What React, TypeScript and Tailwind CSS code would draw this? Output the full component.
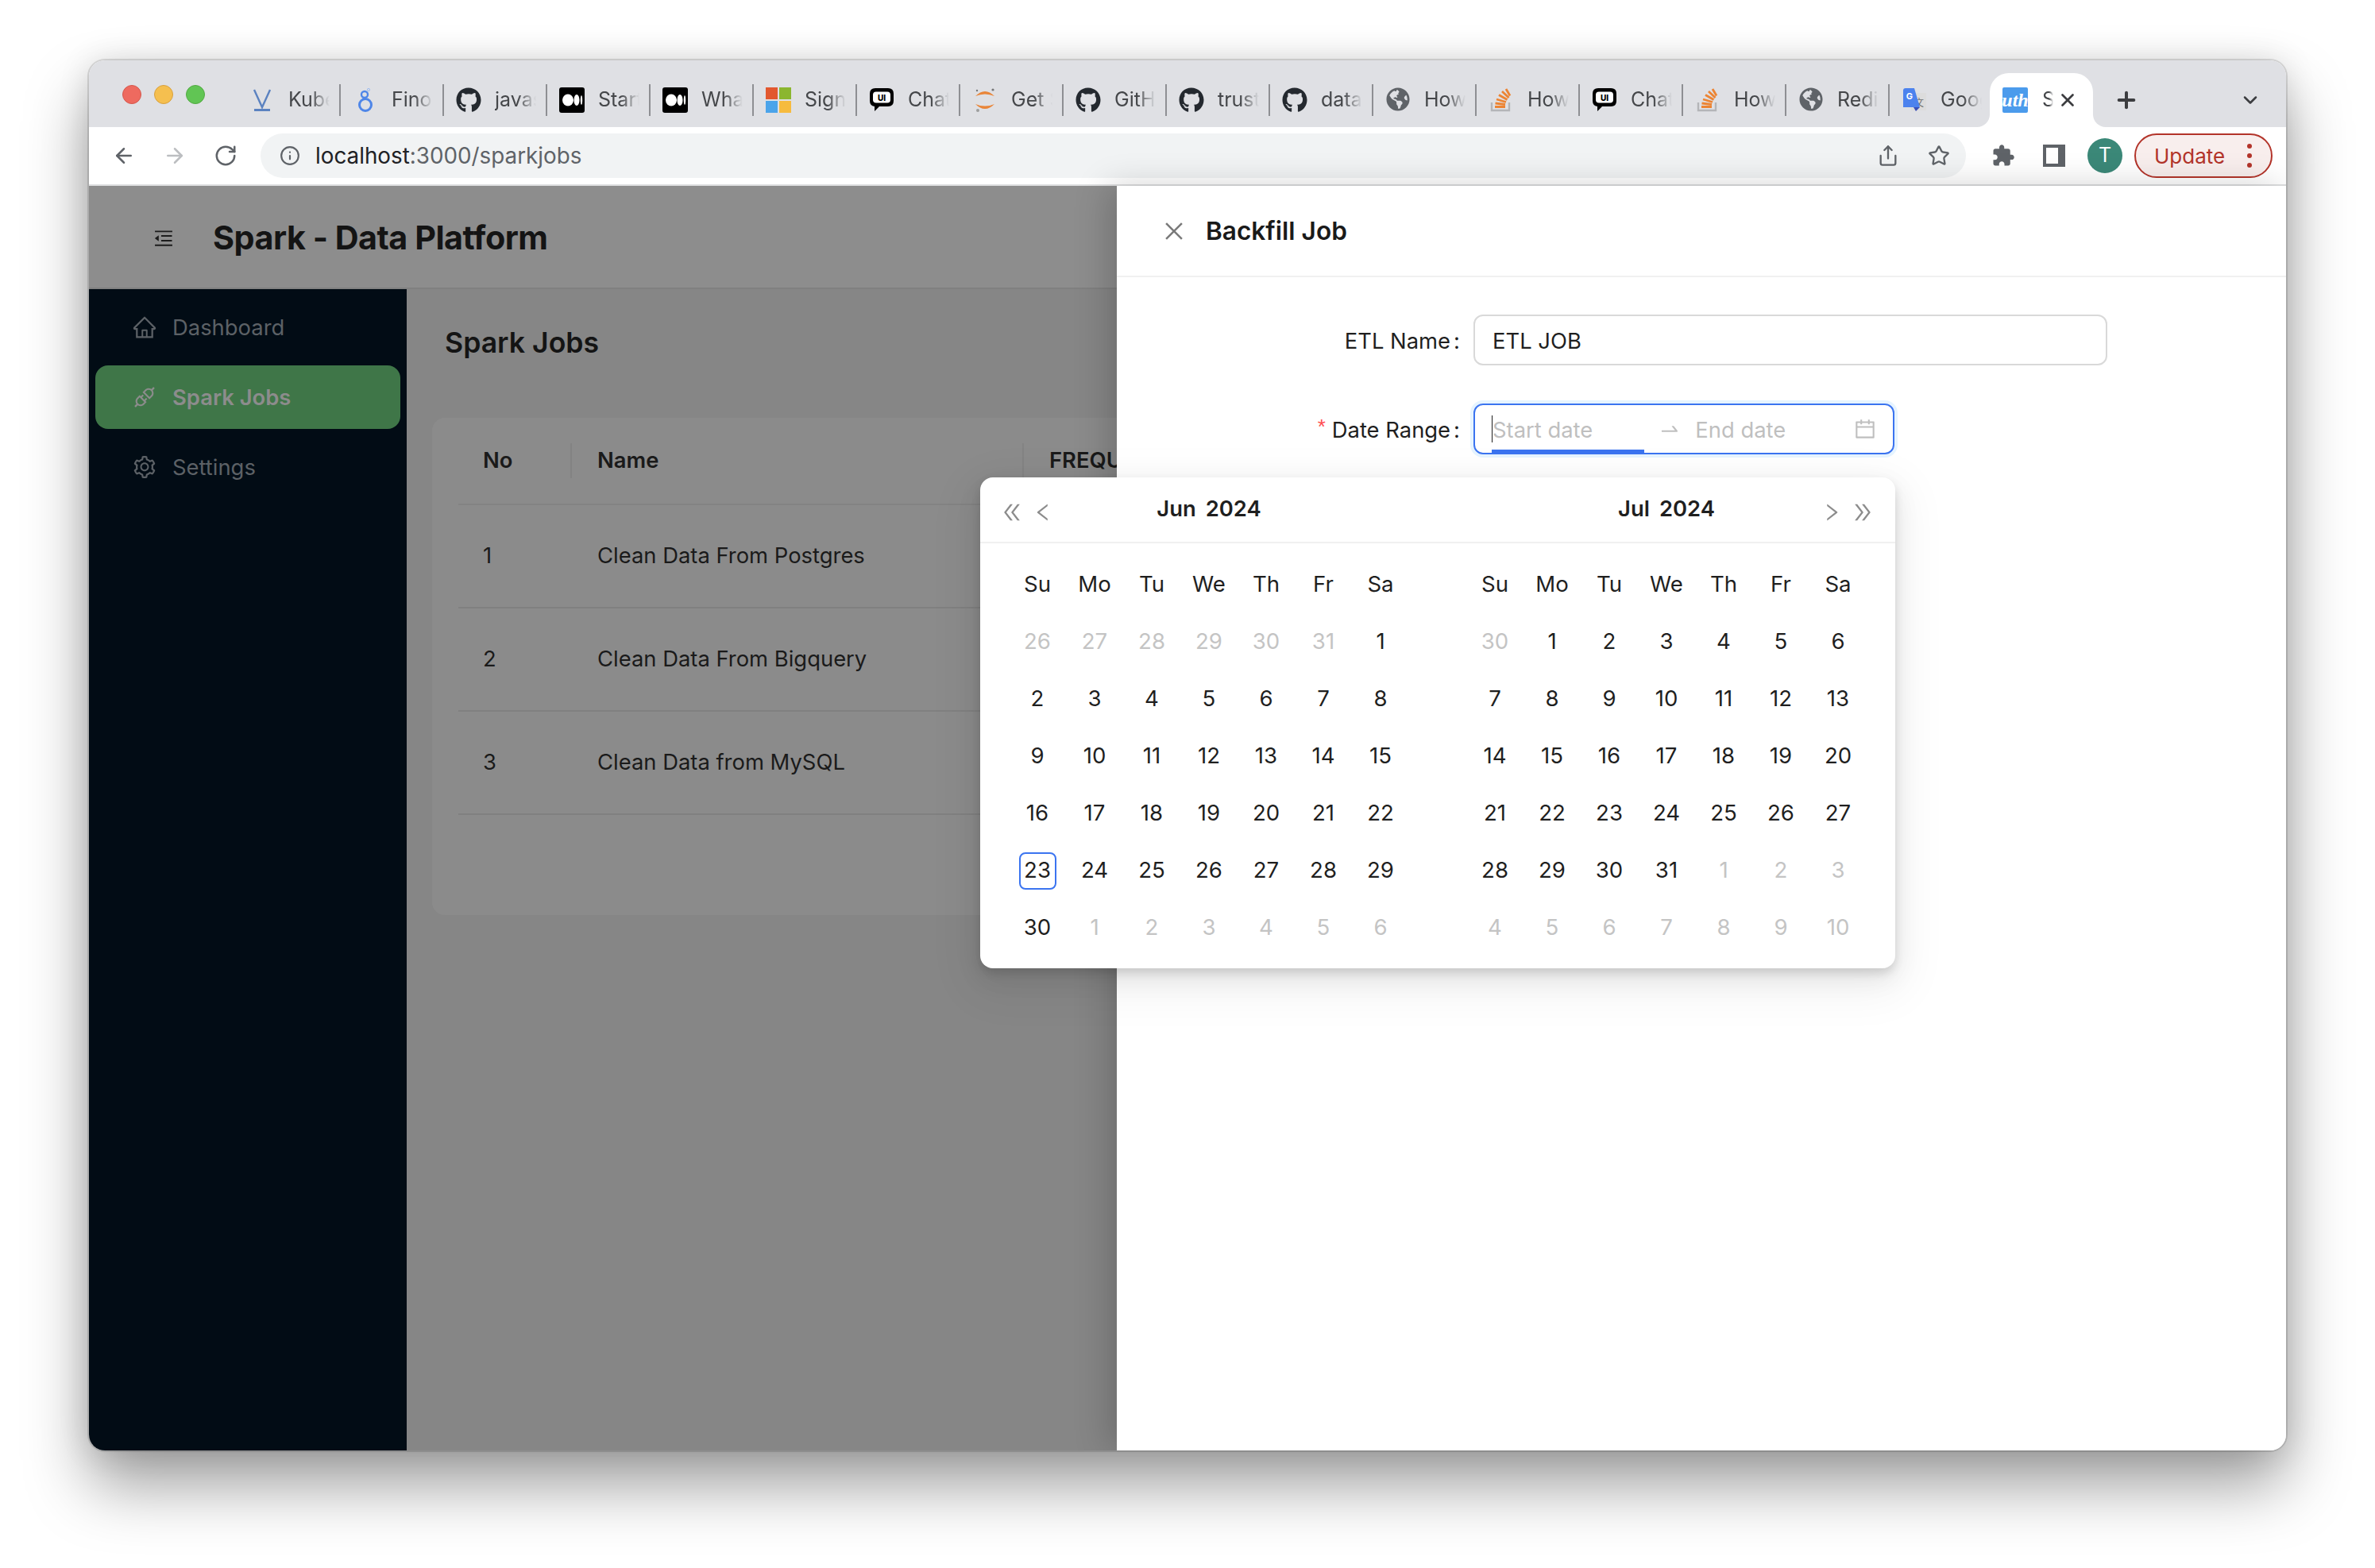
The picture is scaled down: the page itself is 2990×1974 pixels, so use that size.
import React from "react";
import { ArrowLeft, ArrowRight, RotateCw, Info, Share, Star, Plus, X, ChevronDown } from "lucide-react";
import { FaGithub, FaGlobeAmericas } from "react-icons/fa";
import {
  AiOutlineHome, AiOutlineApi, AiOutlineSetting, AiOutlineClose, AiOutlineCalendar, AiOutlineSwapRight,
  AiOutlineDoubleLeft, AiOutlineDoubleRight, AiOutlineLeft, AiOutlineRight, AiOutlineMenuFold,
} from "react-icons/ai";

const VIcon = () => (
  <svg viewBox="0 0 32 32" className="w-8 h-8">
    <path d="M6 3 L16 25 L26 3" fill="none" stroke="#5b82c0" strokeWidth="2.4" />
    <rect x="6" y="27" width="20" height="3" fill="#5b82c0" />
  </svg>
);
const FinoIcon = () => (
  <svg viewBox="0 0 32 32" className="w-8 h-8">
    <circle cx="16" cy="22" r="7.5" fill="none" stroke="#4f86e8" strokeWidth="3" />
    <circle cx="15" cy="9" r="4" fill="none" stroke="#4f86e8" strokeWidth="2.4" />
    <circle cx="20" cy="3" r="1.6" fill="none" stroke="#9dbcf0" strokeWidth="1" />
  </svg>
);
const MediumIcon = () => (
  <svg viewBox="0 0 32 32" className="w-8 h-8">
    <rect x="0" y="0" width="32" height="32" rx="3" fill="#000" />
    <ellipse cx="11" cy="16" rx="7" ry="7.5" fill="#fff" />
    <ellipse cx="22" cy="16" rx="3.5" ry="7" fill="#fff" />
    <ellipse cx="28" cy="16" rx="1.2" ry="6" fill="#fff" />
  </svg>
);
const MsIcon = () => (
  <svg viewBox="0 0 32 32" className="w-8 h-8">
    <rect x="0" y="0" width="15" height="15" fill="#e2582f" />
    <rect x="17" y="0" width="15" height="15" fill="#8bb62f" />
    <rect x="0" y="17" width="15" height="15" fill="#4ba4ea" />
    <rect x="17" y="17" width="15" height="15" fill="#f6bb3f" />
  </svg>
);
const ChatIcon = () => (
  <svg viewBox="0 0 32 32" className="w-8 h-8">
    <path d="M8 1 H24 Q31 1 31 8 V17 Q31 24 24 24 H13 L7 30 V24 Q1 23 1 17 V8 Q1 1 8 1 Z" fill="#000" />
    <rect x="5" y="5.5" width="22" height="14" rx="4" fill="#fff" />
    <text x="16" y="16.5" textAnchor="middle" fontSize="10" fontWeight="800" fill="#000" fontFamily="Inter, sans-serif">UI</text>
  </svg>
);
const JupyterIcon = () => (
  <svg viewBox="0 0 32 32" className="w-8 h-8">
    <path d="M4 11 Q16 -1 28 11 Q16 6 4 11 Z" fill="#e9863a" />
    <path d="M4 21 Q16 33 28 21 Q16 26 4 21 Z" fill="#e9863a" />
    <circle cx="26" cy="3" r="1.6" fill="#767677" />
    <circle cx="6" cy="4" r="1.2" fill="#767677" />
    <circle cx="7" cy="29" r="2" fill="#9e9e9e" />
  </svg>
);
const SoIcon = () => (
  <svg viewBox="0 0 32 32" className="w-8 h-8">
    <path d="M4 19 V29 H26 V19" fill="none" stroke="#b4b5b8" strokeWidth="2.4" />
    <g stroke="#ec8433" strokeWidth="2.8">
      <path d="M8 24.5 H21" />
      <path d="M8.5 20 L21 21.5" />
      <path d="M10 15 L22 18.5" />
      <path d="M13 9.5 L23.5 15.5" />
      <path d="M17 5 L25.5 13" />
      <path d="M22 2 L27 10.5" />
    </g>
  </svg>
);
const TranslateIcon = () => (
  <svg viewBox="0 0 32 32" className="w-8 h-8">
    <rect x="12" y="7" width="19" height="22" fill="#dcdcdc" />
    <text x="22" y="24" textAnchor="middle" fontSize="12" fill="#6b6b6b" fontFamily="Noto Sans CJK SC, sans-serif">文</text>
    <path d="M2 4 Q2 1 5 1 H16 L23 25 H2 Z" fill="#4c82ee" />
    <path d="M15 25 H23 L18 30 Z" fill="#3a4fb8" />
    <text x="10" y="15" textAnchor="middle" fontSize="11" fontWeight="700" fill="#fff" fontFamily="Inter, sans-serif">G</text>
  </svg>
);
const UthIcon = () => (
  <svg viewBox="0 0 32 32" className="w-8 h-8">
    <defs>
      <clipPath id="uth"><rect width="32" height="32" rx="2" /></clipPath>
    </defs>
    <g clipPath="url(#uth)">
      <rect width="32" height="32" fill="#4b9bec" />
      <text x="16" y="24" textAnchor="middle" fontSize="24" fontWeight="700" fontStyle="italic" fill="#fff" fontFamily="Liberation Serif, serif">uth</text>
    </g>
  </svg>
);
const PuzzleIcon = () => (
  <svg viewBox="0 0 24 24" className="ml-[32px] w-[30px] h-[30px]" fill="#5f6368">
    <path d="M20.5 11H19V7c0-1.1-.9-2-2-2h-4V3.5C13 2.12 11.88 1 10.5 1S8 2.12 8 3.5V5H4c-1.1 0-1.99.9-1.99 2v3.8H3.5c1.49 0 2.7 1.21 2.7 2.7s-1.21 2.7-2.7 2.7H2V20c0 1.1.9 2 2 2h3.8v-1.5c0-1.49 1.21-2.7 2.7-2.7 1.49 0 2.7 1.21 2.7 2.7V22H17c1.1 0 2-.9 2-2v-4h1.5c1.38 0 2.5-1.12 2.5-2.5S21.88 11 20.5 11z" />
  </svg>
);
const Gh = () => <FaGithub className="w-8 h-8 text-[#24292f]" />;
const Globe = () => <FaGlobeAmericas className="w-[30px] h-[30px] mx-[1px] text-[#5f6368]" />;

const tabs: { icon: React.ReactNode; label: string }[] = [
  { icon: <VIcon />, label: "Kube" },
  { icon: <FinoIcon />, label: "Finop" },
  { icon: <Gh />, label: "javas" },
  { icon: <MediumIcon />, label: "Start" },
  { icon: <MediumIcon />, label: "What" },
  { icon: <MsIcon />, label: "Sign" },
  { icon: <ChatIcon />, label: "Chat" },
  { icon: <JupyterIcon />, label: "Get S" },
  { icon: <Gh />, label: "GitHu" },
  { icon: <Gh />, label: "trust" },
  { icon: <Gh />, label: "data" },
  { icon: <Globe />, label: "How" },
  { icon: <SoIcon />, label: "How" },
  { icon: <ChatIcon />, label: "Chat" },
  { icon: <SoIcon />, label: "How" },
  { icon: <Globe />, label: "Redis" },
];

function Tab({ icon, label, sep }: { icon: React.ReactNode; label: string; sep: boolean }) {
  return (
    <div className={`${sep ? "w-[130px]" : "w-[126px]"} h-[68px] flex items-center pl-[15px] shrink-0`}>
      <div className="w-8 h-8 shrink-0">{icon}</div>
      <div className="ml-[17px] w-[52px] overflow-hidden whitespace-nowrap text-[25px] text-[#45474a] [mask-image:linear-gradient(to_right,black_55%,transparent_100%)]">
        {label}
      </div>
      {sep && <div className="ml-auto w-[2px] h-[40px] bg-[#8e8f93]" />}
    </div>
  );
}

function BrowserChrome() {
  return (
    <>
      <div className="h-[84px] bg-[#dfe0e4] flex items-end shrink-0">
        <div className="w-[187px] h-full pl-[42px] pt-[31px] flex gap-[16px] shrink-0">
          <div className="w-6 h-6 rounded-full bg-[#ee6a5f] border border-[#d5574c]" />
          <div className="w-6 h-6 rounded-full bg-[#f5bf4f] border border-[#d8a03e]" />
          <div className="w-6 h-6 rounded-full bg-[#61c554] border border-[#52a942]" />
        </div>
        {tabs.map((t, i) => (
          <Tab key={i} icon={t.icon} label={t.label} sep />
        ))}
        <Tab icon={<TranslateIcon />} label="Goog" sep={false} />
        <div className="relative w-[130px] h-[68px] bg-white rounded-t-[24px] flex items-center pl-[16px] shrink-0">
          <div className="absolute -left-[16px] bottom-0 w-[16px] h-[16px] bg-white">
            <div className="w-full h-full bg-[#dfe0e4] rounded-br-[16px]" />
          </div>
          <div className="absolute -right-[16px] bottom-0 w-[16px] h-[16px] bg-white">
            <div className="w-full h-full bg-[#dfe0e4] rounded-bl-[16px]" />
          </div>
          <UthIcon />
          <div className="ml-[18px] w-[14px] overflow-hidden text-[25px] text-[#45474a] [mask-image:linear-gradient(to_right,black_60%,transparent_100%)]">S</div>
          <X className="ml-[5px] w-[26px] h-[26px] text-[#3c3d40]" strokeWidth={2.5} />
        </div>
        <div className="h-[68px] flex items-center ml-[26px]">
          <Plus className="w-8 h-8 text-[#3c3d40]" strokeWidth={3} />
        </div>
        <div className="h-[68px] flex items-center ml-[126px]">
          <ChevronDown className="w-[28px] h-[28px] text-[#3c3d40]" strokeWidth={2.2} />
        </div>
      </div>
      <div className="h-[74px] bg-white border-b-2 border-[#dedfe0] flex items-center pl-[29px] shrink-0">
        <ArrowLeft className="w-[30px] h-[30px] text-[#5f6368]" strokeWidth={2} />
        <ArrowRight className="ml-[34px] w-[30px] h-[30px] text-[#bcbec1]" strokeWidth={2} />
        <RotateCw className="ml-[34px] w-[30px] h-[30px] text-[#5f6368]" strokeWidth={2} />
        <div className="ml-[29px] w-[2147px] h-[56px] rounded-full bg-[#f1f3f4] flex items-center pl-[24px] pr-[20px]">
          <Info className="w-[26px] h-[26px] text-[#5f6368]" strokeWidth={2} />
          <div className="ml-[19px] pt-[2px] text-[27.8px] text-[#5f6368] whitespace-nowrap">
            <span className="text-[#202124]">localhost</span>:3000/sparkjobs
          </div>
          <Share className="ml-auto w-[28px] h-[28px] text-[#5f6368]" strokeWidth={2} />
          <Star className="ml-[36px] w-[28px] h-[28px] text-[#5f6368]" strokeWidth={2} />
        </div>
        <PuzzleIcon />
        <div className="ml-[35px] w-[28px] h-[28px] border-[#5f6368] border-[4px] border-r-[9px] bg-white" />
        <div className="ml-[28px] w-[44px] h-[44px] rounded-full bg-[#3b8878] flex items-center justify-center text-white text-[25px]">T</div>
        <div className="ml-[15px] w-[174px] h-[56px] rounded-full bg-[#f8eeed] border-2 border-[#b3342a] flex items-center pl-[23px] text-[#b3342a] text-[26px]">
          Update
          <div className="ml-[28px] flex flex-col gap-[6px]">
            <div className="w-[6px] h-[6px] rounded-full bg-[#b3342a]" />
            <div className="w-[6px] h-[6px] rounded-full bg-[#b3342a]" />
            <div className="w-[6px] h-[6px] rounded-full bg-[#b3342a]" />
          </div>
        </div>
      </div>
    </>
  );
}

function SideItem({ icon, label, active }: { icon: React.ReactNode; label: string; active?: boolean }) {
  return (
    <div
      className={`h-[80px] rounded-[16px] flex items-center pl-[46px] gap-[19px] text-[27.4px] ${
        active ? "bg-[#3f7648] text-[#8c8c8c] font-semibold" : "text-[#5c6166]"
      }`}
    >
      <span className="text-[32px] flex">{icon}</span>
      <span className="pt-[1px]">{label}</span>
    </div>
  );
}

const rows = [
  ["1", "Clean Data From Postgres"],
  ["2", "Clean Data From Bigquery"],
  ["3", "Clean Data from MySQL"],
];

function Background() {
  return (
    <div className="w-[1294px] shrink-0 flex flex-col overflow-hidden">
      <div className="h-[130px] shrink-0 bg-[#8d8d8d] border-b-2 border-[#808080] flex items-center pl-[80px] pt-[3px]">
        <AiOutlineMenuFold className="text-[28px] text-[#1c1c1c]" />
        <div className="ml-[48px] text-[41.3px] font-bold text-[#141414] whitespace-nowrap tracking-[-0.5px]">Spark - Data Platform</div>
      </div>
      <div className="flex flex-1 min-h-0">
        <div className="w-[400px] shrink-0 bg-[#020c15] px-[8px] pt-[8px] flex flex-col gap-[8px]">
          <SideItem icon={<AiOutlineHome />} label="Dashboard" />
          <SideItem icon={<AiOutlineApi />} label="Spark Jobs" active />
          <SideItem icon={<AiOutlineSetting />} label="Settings" />
        </div>
        <div className="flex-1 bg-[#868686] pl-[32px]">
          <div className="h-[162px] pl-[16px] pt-[46px] text-[35.6px] leading-[44px] font-semibold text-[#141414]">Spark Jobs</div>
          <div className="w-[1000px] h-[626px] bg-[#8b8b8b] rounded-[16px] pl-[33px] text-[27.4px] text-[#1a1a1a]">
            <div className="h-[110px] border-b-2 border-[#838383] flex items-center font-semibold">
              <div className="w-[143px] pl-[31px] flex items-center justify-between">
                No
                <div className="w-[2px] h-[44px] bg-[#838383]" />
              </div>
              <div className="w-[569px] pl-[32px] flex items-center justify-between">
                Name
                <div className="w-[2px] h-[44px] bg-[#838383]" />
              </div>
              <div className="pl-[32px] whitespace-nowrap">FREQUENCY</div>
            </div>
            {rows.map((r) => (
              <div key={r[0]} className="h-[130px] border-b-2 border-[#808080] flex items-center">
                <div className="w-[143px] pl-[31px]">{r[0]}</div>
                <div className="pl-[32px]">{r[1]}</div>
              </div>
            ))}
          </div>
        </div>
      </div>
    </div>
  );
}

const junRows = [
  [26, 27, 28, 29, 30, 31, 1],
  [2, 3, 4, 5, 6, 7, 8],
  [9, 10, 11, 12, 13, 14, 15],
  [16, 17, 18, 19, 20, 21, 22],
  [23, 24, 25, 26, 27, 28, 29],
  [30, 1, 2, 3, 4, 5, 6],
];
const julRows = [
  [30, 1, 2, 3, 4, 5, 6],
  [7, 8, 9, 10, 11, 12, 13],
  [14, 15, 16, 17, 18, 19, 20],
  [21, 22, 23, 24, 25, 26, 27],
  [28, 29, 30, 31, 1, 2, 3],
  [4, 5, 6, 7, 8, 9, 10],
];
const week = ["Su", "Mo", "Tu", "We", "Th", "Fr", "Sa"];

function isCurrent(rowIdx: number, day: number) {
  if (rowIdx === 0) return day < 20;
  if (rowIdx >= 4) return day > 20;
  return true;
}

function MonthPanel({ month, data, side, todayCell }: { month: string; data: number[][]; side: "left" | "right"; todayCell?: boolean }) {
  return (
    <div className="w-[576px]">
      <div className="h-[83px] border-b-2 border-[#f0f0f0] grid grid-cols-[1fr_auto_1fr] items-center">
        <div className="flex items-center gap-[10px] pl-[25px] pt-[6px] text-[#8c8c8c]">
          {side === "left" && (
            <>
              <AiOutlineDoubleLeft className="text-[30px]" />
              <AiOutlineLeft className="text-[28px]" />
            </>
          )}
        </div>
        <div className="text-[27.4px] font-semibold text-[#1f1f1f] flex gap-[12px] -mt-[2px]">
          <span>{month}</span>
          <span>2024</span>
        </div>
        <div className="flex items-center justify-end gap-[10px] pr-[26px] pt-[6px] text-[#8c8c8c]">
          {side === "right" && (
            <>
              <AiOutlineRight className="text-[28px]" />
              <AiOutlineDoubleRight className="text-[30px]" />
            </>
          )}
        </div>
      </div>
      <div className="ml-[36px] mt-[16px] w-[504px] grid grid-cols-7 auto-rows-[72px] text-[27.6px] text-[#1f1f1f]">
        {week.map((d) => (
          <div key={d} className="flex items-center justify-center">{d}</div>
        ))}
        {data.map((r, ri) =>
          r.map((d, ci) => {
            const cur = isCurrent(ri, d);
            const today = todayCell && ri === 4 && ci === 0;
            return (
              <div key={`${ri}-${ci}`} className={`flex items-center justify-center ${cur ? "" : "text-[#c4c4c4]"}`}>
                <div className={`w-[47px] h-[47px] flex items-center justify-center rounded-[8px] ${today ? "border-2 border-[#3b74f0]" : ""}`}>{d}</div>
              </div>
            );
          })
        )}
      </div>
    </div>
  );
}

function Drawer() {
  return (
    <div className="relative z-10 flex-1 bg-white shadow-[-12px_0_40px_rgba(0,0,0,0.18)]">
      <div className="h-[115px] border-b-2 border-[#f0f0f0] flex items-center pl-[56px]">
        <AiOutlineClose className="text-[32px] text-[#7a7a7a]" />
        <div className="ml-[24px] text-[31.6px] font-semibold text-[#1a1a1a]">Backfill Job</div>
      </div>
      <div className="pt-[47px] flex flex-col gap-[48px] text-[27.4px] leading-[42px] text-[#1f1f1f]">
        <div className="flex items-center">
          <div className="w-[449px] pr-[17px] pt-[1px] flex justify-end gap-[4px]">
            <span>ETL Name</span>
            <span>:</span>
          </div>
          <div className="w-[798px] h-[64px] border-2 border-[#d9d9d9] rounded-[12px] flex items-center pl-[22px] pt-[1px]">ETL JOB</div>
        </div>
        <div className="flex items-center">
          <div className="w-[449px] pr-[17px] pt-[1px] flex justify-end items-center gap-[4px]">
            <span className="text-[#ff4d4f] -mt-[8px] mr-[4px] text-[26px] [font-family:'Liberation_Sans',sans-serif]">*</span>
            <span>Date Range</span>
            <span>:</span>
          </div>
          <div className="relative w-[530px] h-[64px] border-2 border-[#3b74f0] rounded-[12px] shadow-[0_0_0_4px_rgba(5,145,255,0.1)] flex items-center pl-[21px] text-[#bfbfbf]">
            <div className="w-[1px] h-[34px] bg-[#1f1f1f]" />
            <span className="pt-[1px]">Start date</span>
            <AiOutlineSwapRight className="ml-[83px] text-[28px]" />
            <span className="ml-[18px] pt-[1px]">End date</span>
            <AiOutlineCalendar className="ml-auto mr-[20px] text-[30px]" />
            <div className="absolute left-[21px] bottom-0 w-[192px] h-[4px] bg-[#3b74f0]" />
          </div>
        </div>
      </div>
      <div className="absolute left-[-172px] top-[367px] w-[1152px] h-[618px] bg-white rounded-[16px] flex shadow-[0_12px_32px_rgba(0,0,0,0.08),0_6px_12px_rgba(0,0,0,0.12),0_18px_56px_16px_rgba(0,0,0,0.05)]">
        <MonthPanel month="Jun" data={junRows} side="left" todayCell />
        <MonthPanel month="Jul" data={julRows} side="right" />
      </div>
    </div>
  );
}

export default function App() {
  return (
    <div className="w-[2990px] h-[1974px] bg-white pt-[76px] pl-[112px] [font-family:Inter,sans-serif]">
      <div className="w-[2766px] h-[1750px] rounded-[20px] overflow-hidden flex flex-col shadow-[0_0_0_2px_rgba(0,0,0,0.12),0_44px_80px_rgba(0,0,0,0.38),0_0_40px_rgba(0,0,0,0.12)]">
        <BrowserChrome />
        <div className="flex flex-1 min-h-0">
          <Background />
          <Drawer />
        </div>
      </div>
    </div>
  );
}
